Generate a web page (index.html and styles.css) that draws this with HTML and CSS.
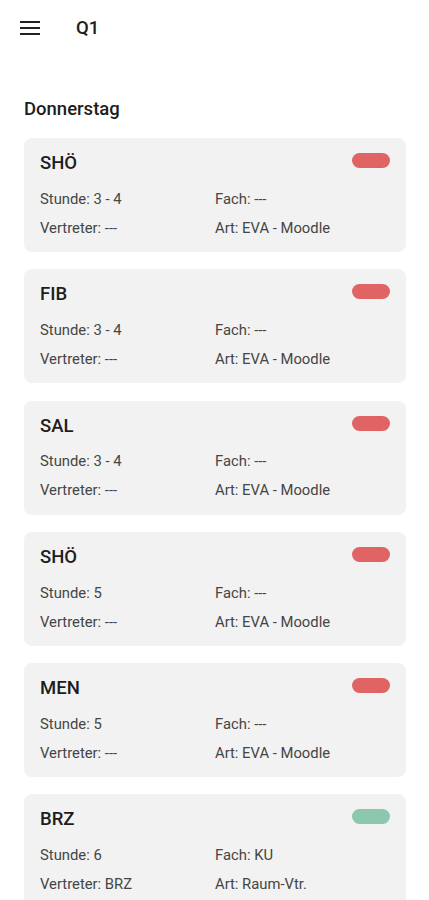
FILE: index.html
```html
<!DOCTYPE html>
<html lang="de">

<head>
    <meta charset="UTF-8">
    <meta name="viewport" content="width=device-width, initial-scale=1.0">
    <title>Vertretungsplan</title>
    <link rel="stylesheet" href="styles.css">
</head>

<body>
    <div class="app-bar">
        <span class="menu-btn">
            <svg width="20" height="14" viewBox="0 0 20 14">
                <rect x="0" y="0" width="20" height="2" fill="#222"></rect>
                <rect x="0" y="6" width="20" height="2" fill="#222"></rect>
                <rect x="0" y="12" width="20" height="2" fill="#222"></rect>
            </svg>
        </span>
        <span class="app-title">Q1</span>
    </div>

    <div class="day">
        <div class="day-title">Donnerstag</div>

        <div class="card-list">
            <div class="card">
                <div class="card-head">
                    <span class="card-name">SHÖ</span>
                    <span class="pill red"></span>
                </div>
                <div class="card-info">
                    <span>Stunde: 3 - 4</span>
                    <span>Fach: ---</span>
                    <span>Vertreter: ---</span>
                    <span>Art: EVA - Moodle</span>
                </div>
            </div>

            <div class="card">
                <div class="card-head">
                    <span class="card-name">FIB</span>
                    <span class="pill red"></span>
                </div>
                <div class="card-info">
                    <span>Stunde: 3 - 4</span>
                    <span>Fach: ---</span>
                    <span>Vertreter: ---</span>
                    <span>Art: EVA - Moodle</span>
                </div>
            </div>

            <div class="card">
                <div class="card-head">
                    <span class="card-name">SAL</span>
                    <span class="pill red"></span>
                </div>
                <div class="card-info">
                    <span>Stunde: 3 - 4</span>
                    <span>Fach: ---</span>
                    <span>Vertreter: ---</span>
                    <span>Art: EVA - Moodle</span>
                </div>
            </div>

            <div class="card">
                <div class="card-head">
                    <span class="card-name">SHÖ</span>
                    <span class="pill red"></span>
                </div>
                <div class="card-info">
                    <span>Stunde: 5</span>
                    <span>Fach: ---</span>
                    <span>Vertreter: ---</span>
                    <span>Art: EVA - Moodle</span>
                </div>
            </div>

            <div class="card">
                <div class="card-head">
                    <span class="card-name">MEN</span>
                    <span class="pill red"></span>
                </div>
                <div class="card-info">
                    <span>Stunde: 5</span>
                    <span>Fach: ---</span>
                    <span>Vertreter: ---</span>
                    <span>Art: EVA - Moodle</span>
                </div>
            </div>

            <div class="card">
                <div class="card-head">
                    <span class="card-name">BRZ</span>
                    <span class="pill green"></span>
                </div>
                <div class="card-info">
                    <span>Stunde: 6</span>
                    <span>Fach: KU</span>
                    <span>Vertreter: BRZ</span>
                    <span>Art: Raum-Vtr.</span>
                </div>
            </div>
        </div>
    </div>
</body>

</html>
```

FILE: styles.css
```css
* {
    padding: 0;
    margin: 0;
    box-sizing: border-box;
}

body {
    font-family: Roboto, "Noto Sans", sans-serif;
    background-color: #fff;
    color: #222;
}

.app-bar {
    display: flex;
    align-items: center;
    height: 56px;
    padding-left: 20px;
}

.menu-btn {
    display: flex;
    width: 56px;
}

.app-title {
    font-size: 18.5px;
    font-weight: 500;
    color: #1d1d1d;
}

.day {
    padding: 0 23px 0 24px;
}

.day-title {
    margin-top: 40px;
    height: 27px;
    font-size: 18.5px;
    font-weight: 500;
    line-height: 27px;
    color: #1d1d1d;
}

.card-list {
    display: flex;
    flex-direction: column;
    gap: 17.25px;
    margin-top: 15px;
}

.card {
    padding: 13px 16px 14.25px 16px;
    background-color: #f2f2f2;
    border-radius: 8px;
}

.card-head {
    display: flex;
    justify-content: space-between;
    align-items: flex-start;
    height: 24px;
}

.card-name {
    font-size: 18.5px;
    font-weight: 500;
    line-height: 24px;
    color: #1d1d1d;
}

.pill {
    width: 38px;
    height: 15px;
    margin-top: 2px;
    border-radius: 8px;
}

.pill.red {
    background-color: #e06464;
}

.pill.green {
    background-color: #8cc7b0;
}

.card-info {
    display: grid;
    grid-template-columns: 175px 1fr;
    row-gap: 9px;
    margin-top: 13.75px;
    font-size: 14.8px;
    line-height: 20px;
    color: #454545;
}
```
